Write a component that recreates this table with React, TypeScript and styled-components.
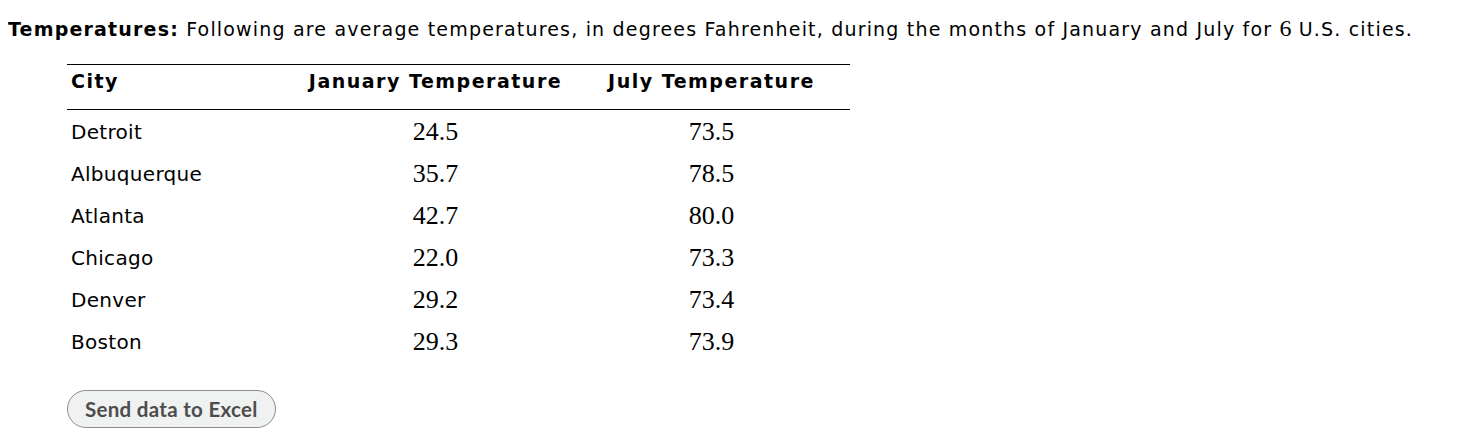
import React from 'react'
import styled, { createGlobalStyle } from 'styled-components'

interface CityRow {
  city: string
  january: string
  july: string
}

const rows: CityRow[] = [
  { city: 'Detroit', january: '24.5', july: '73.5' },
  { city: 'Albuquerque', january: '35.7', july: '78.5' },
  { city: 'Atlanta', january: '42.7', july: '80.0' },
  { city: 'Chicago', january: '22.0', july: '73.3' },
  { city: 'Denver', january: '29.2', july: '73.4' },
  { city: 'Boston', january: '29.3', july: '73.9' },
]

const GlobalStyle = createGlobalStyle`
  body {
    margin: 8px;
    background: #ffffff;
    color: #000000;
    font-family: "DejaVu Sans", Verdana, sans-serif;
  }
`

export default function App() {
  return (
    <>
      <GlobalStyle />
      <Intro>
        <Label>Temperatures:</Label> Following are average temperatures, in
        degrees Fahrenheit, during the months of January and July for{' '}
        <MathNum>6</MathNum> U.S. cities.
      </Intro>
      <DataTable>
        <thead>
          <tr>
            <HeadCell align="left" width={223}>
              City
            </HeadCell>
            <HeadCell align="center" width={267}>
              January Temperature
            </HeadCell>
            <HeadCell align="center">July Temperature</HeadCell>
          </tr>
        </thead>
        <tbody>
          {rows.map((row) => (
            <tr key={row.city}>
              <CityCell>{row.city}</CityCell>
              <NumCell>{row.january}</NumCell>
              <NumCell>{row.july}</NumCell>
            </tr>
          ))}
        </tbody>
      </DataTable>
      <ExcelButton type="button">Send data to Excel</ExcelButton>
    </>
  )
}

const Intro = styled.p`
  margin: 5px 0 0;
  font-size: 19px;
  letter-spacing: 1.18px;
  line-height: 30px;
`

const Label = styled.strong`
  font-weight: 700;
`

const MathNum = styled.span`
  font-family: "Liberation Serif", "Times New Roman", serif;
  font-size: 24px;
  letter-spacing: 0;
`

const DataTable = styled.table`
  margin: 20px 0 0 59px;
  width: 783px;
  border-collapse: collapse;
  border-top: 1px solid #000;
`

const HeadCell = styled.th<{ align: 'left' | 'center'; width?: number }>`
  height: 40px;
  padding: 4px 4px 0;
  vertical-align: top;
  width: ${({ width }) => (width ? `${width}px` : 'auto')};
  text-align: ${({ align }) => align};
  font-size: 19px;
  letter-spacing: 1.5px;
  line-height: 24px;
  font-weight: 700;
  border-bottom: 1px solid #000;
`

const CityCell = styled.td`
  height: 40px;
  padding: 2px 4px 0;
  font-size: 20px;
  letter-spacing: 0.3px;
`

const NumCell = styled.td`
  height: 40px;
  padding: 2px 4px 0;
  text-align: center;
  font-family: "Liberation Serif", "Times New Roman", serif;
  font-size: 26px;
`

const ExcelButton = styled.button`
  margin: 28px 0 0 59px;
  height: 38px;
  padding: 0 17px;
  border: 1px solid #8c8c8c;
  border-radius: 19px;
  background: #f0f2f1;
  color: #4d4d4d;
  font-family: Lato, "Open Sans", sans-serif;
  font-size: 20.5px;
  letter-spacing: 0.3px;
  font-weight: 700;
  cursor: pointer;
`
